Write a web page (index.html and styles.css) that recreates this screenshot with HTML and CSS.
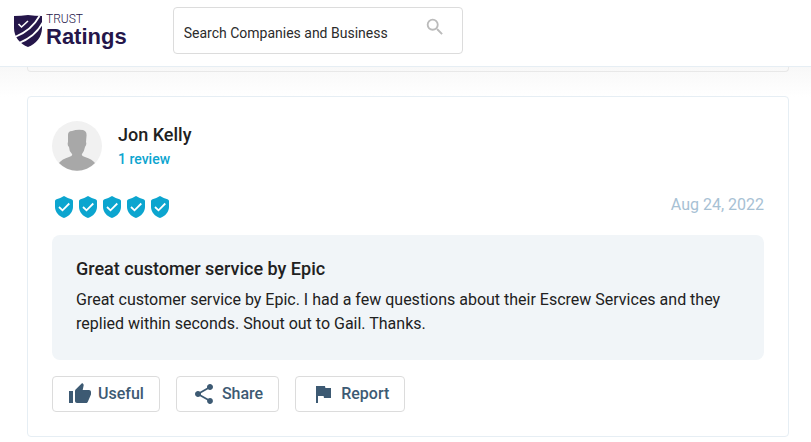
FILE: index.html
```html
<!DOCTYPE html>
<html lang="en">
<head>
    <meta charset="UTF-8">
    <meta name="viewport" content="width=device-width, initial-scale=1.0">
    <title>Trust Ratings</title>
    <link rel="stylesheet" href="styles.css">
</head>
<body>
    <header class="header">
        <a class="logo" href="#">
            <svg class="logo-mark" viewBox="0 0 28 32" aria-hidden="true">
                <path fill="#25164a" d="M0 1Q7 1 14 0Q21 1 28 1V13C28 22 22 29 14 32C6 29 0 22 0 13Z"/>
                <path fill="none" stroke="#fff" stroke-width="1.600" d="M4.500 9L7.500 12L14 6"/>
                <path fill="none" stroke="#fff" stroke-width="1.800" d="M1 22C11 18 20 11 25.500 1M5 28C15 24 24 17 29 7"/>
            </svg>
            <span class="logo-text">
                <span class="logo-top">TRUST</span>
                <span class="logo-name">Ratings</span>
            </span>
        </a>
        <form class="search">
            <input type="text" placeholder="Search Companies and Business" aria-label="Search Companies and Business">
            <button type="button" aria-label="Search">
                <svg viewBox="0 0 24 24"><path d="M15.500 14h-.79l-.28-.27A6.471 6.471 0 0 0 16 9.500 6.500 6.500 0 1 0 9.500 16c1.610 0 3.090-.59 4.230-1.570l.27.28v.79l5 4.990L20.490 19l-4.990-5zm-6 0C7.010 14 5 11.990 5 9.500S7.010 5 9.500 5 14 7.010 14 9.500 11.990 14 9.500 14z"/></svg>
            </button>
        </form>
    </header>

    <main class="reviews">
        <div class="card-end"></div>
        <article class="card">
            <div class="user">
                <svg class="avatar" viewBox="0 0 50 50" aria-hidden="true">
                    <circle cx="25" cy="25" r="25" fill="#f1f1f1"/>
                    <path fill="#a8a8a8" d="M16 14Q16 10 20 10Q25 8 31 9Q35 10 34.500 15L34 21Q35 23 33 26Q32 31 30 33Q29 35 33 36Q40 38 43 42A25 25 0 0 1 7 42Q10 38 17 36Q21 35 20 33Q17 30 17 26Q15 24 16 21Z"/>
                </svg>
                <div class="user-info">
                    <h2 class="user-name">Jon Kelly</h2>
                    <a class="user-count" href="#">1 review</a>
                </div>
            </div>

            <div class="meta">
                <div class="rating" role="img" aria-label="5 out of 5">
                    <svg viewBox="0 0 24 24"><use href="#shield"/></svg>
                    <svg viewBox="0 0 24 24"><use href="#shield"/></svg>
                    <svg viewBox="0 0 24 24"><use href="#shield"/></svg>
                    <svg viewBox="0 0 24 24"><use href="#shield"/></svg>
                    <svg viewBox="0 0 24 24"><use href="#shield"/></svg>
                </div>
                <time class="date" datetime="2022-08-24">Aug 24, 2022</time>
            </div>

            <div class="content">
                <h3>Great customer service by Epic</h3>
                <p>Great customer service by Epic. I had a few questions about their Escrew Services and they replied within seconds. Shout out to Gail. Thanks.</p>
            </div>

            <div class="actions">
                <button type="button">
                    <svg viewBox="0 0 24 24"><path d="M1 21h4V9H1v12zm22-11c0-1.100-.9-2-2-2h-6.310l.95-4.570.03-.32c0-.41-.17-.79-.44-1.060L14.170 1 7.590 7.590C7.220 7.950 7 8.450 7 9v10c0 1.100.9 2 2 2h9c.83 0 1.540-.5 1.840-1.220l3.020-7.050c.09-.23.14-.47.14-.73v-2z"/></svg>
                    Useful
                </button>
                <button type="button">
                    <svg viewBox="0 0 24 24"><path d="M18 16.080c-.76 0-1.440.3-1.960.77L8.910 12.700c.05-.23.09-.46.09-.7s-.04-.47-.09-.7l7.050-4.110c.54.5 1.250.81 2.040.81 1.660 0 3-1.340 3-3s-1.340-3-3-3-3 1.340-3 3c0 .24.04.47.09.7L8.040 9.810C7.500 9.310 6.790 9 6 9c-1.660 0-3 1.340-3 3s1.340 3 3 3c.79 0 1.500-.31 2.040-.81l7.120 4.160c-.05.21-.08.43-.08.65 0 1.610 1.310 2.920 2.920 2.920s2.920-1.310 2.920-2.920-1.310-2.920-2.920-2.920z"/></svg>
                    Share
                </button>
                <button type="button">
                    <svg viewBox="0 0 24 24"><path d="M14.400 6L14 4H5v17h2v-7h5.600l.4 2h7V6z"/></svg>
                    Report
                </button>
            </div>
        </article>
    </main>

    <svg class="symbols" aria-hidden="true">
        <symbol id="shield" viewBox="0 0 24 24">
            <path fill="#0ca5cf" d="M12 1C9.500 2.500 7 3.500 4.500 4.200Q3 4.700 3 6V12C3 17 7 21.500 12 23C17 21.500 21 17 21 12V6Q21 4.700 19.500 4.200C17 3.500 14.500 2.500 12 1Z"/>
            <path fill="none" stroke="#fff" stroke-width="1.800" d="M7 12L10.500 15.300L17.300 8.500"/>
        </symbol>
    </svg>
</body>
</html>
```
FILE: styles.css
```css
* { margin: 0; padding: 0; box-sizing: border-box; }
body {
    background-color: #fff;
    color: #212121;
    font-family: Roboto, "Liberation Sans", sans-serif;
    font-size: 16px;
    line-height: 24px;
}
a { text-decoration: none; }
svg { display: block; flex: none; }
button, input { font: inherit; }

.header {
    display: flex;
    align-items: flex-start;
    gap: 46px;
    padding: 7px 14px 12px;
    border-bottom: 1px solid #e6eef4;
    background-color: #fff;
}
.logo {
    display: flex;
    align-items: flex-end;
    gap: 4px;
    padding-top: 5px;
    color: #25164a;
}
.logo-mark { width: 28px; height: 32px; }
.logo-text { display: flex; flex-direction: column; }
.logo-top {
    font-size: 12px;
    font-weight: 300;
    line-height: 14px;
}
.logo-name {
    font-family: "Liberation Sans", Arial, sans-serif;
    font-size: 22px;
    font-weight: bold;
    line-height: 21px;
}
.search {
    display: flex;
    align-items: center;
    width: 290px; height: 47px;
    padding: 0 16px 0 10px;
    border: 1px solid #dcdcdc;
    border-radius: 4px;
}
.search input {
    flex: 1;
    min-width: 0;
    padding-top: 5px;
    border: 0;
    outline: 0;
    background: none;
    font-size: 14px;
}
.search input::placeholder { color: #2b2b2b; opacity: 1; }
.search button {
    padding-bottom: 7px;
    border: 0;
    background: none;
}
.search svg { width: 22px; height: 22px; fill: #bbb; }

.reviews {
    padding: 0 22px 5px 27px;
    background: linear-gradient(#f8f8f8, #fff 30px);
}
.card-end {
    height: 5px;
    margin-bottom: 24px;
    border: 1px solid #e8e8e8;
    border-top: 0;
    border-radius: 0 0 4px 4px;
}
.card {
    padding: 24px;
    border: 1px solid #e6eef4;
    border-radius: 4px;
    background-color: #fff;
}
.user {
    display: flex;
    align-items: center;
    gap: 16px;
}
.avatar { width: 50px; height: 50px; }
.user-info { padding-top: 2px; }
.user-name { font-size: 18px; font-weight: 500; line-height: 24px; }
.user-count {
    display: block;
    color: #0ca5cf;
    font-size: 14px;
    font-weight: 500;
}
.meta {
    display: flex;
    justify-content: space-between;
    align-items: flex-start;
    padding: 22px 0 16px;
}
.rating { display: flex; padding-top: 2px; }
.rating svg { width: 24px; height: 24px; }
.date { color: #a7c1d4; }

.content {
    padding: 20px 24px 24px;
    border-radius: 8px;
    background-color: #f1f5f8;
}
.content h3 {
    margin-bottom: 5px;
    font-size: 18px;
    font-weight: 500;
    line-height: 28px;
}
.actions {
    display: flex;
    flex-wrap: wrap;
    gap: 16px;
    margin-top: 16px;
}
.actions button {
    display: flex;
    align-items: center;
    gap: 6px;
    height: 36px;
    padding: 0 15px;
    border: 1px solid #dcdcdc;
    border-radius: 4px;
    background-color: #fff;
    color: #3d5a73;
    font-weight: 500;
}
.actions svg { width: 24px; height: 24px; fill: #3d5a73; }
.symbols { position: absolute; width: 0; height: 0; }
```
